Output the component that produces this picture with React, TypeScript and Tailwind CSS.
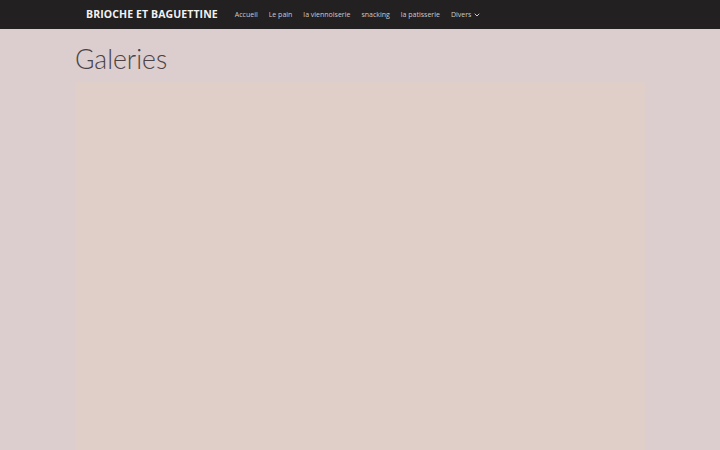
import { ChevronDown } from "lucide-react";

const links = ["Accueil", "Le pain", "la viennoiserie", "snacking", "la patisserie"];

export default function App() {
  return (
    <div className="min-h-screen bg-[#dccdcf] font-['Lato',sans-serif]">
      <nav className="h-[29px] bg-[#222021] flex items-center">
        <div className="w-[570px] mx-auto flex items-center pl-[11px] pt-[1px]">
          <span className="text-[#f2f2f2] text-[10.5px] font-bold tracking-[0.01em] font-['Open_Sans',sans-serif]">
            BRIOCHE ET BAGUETTINE
          </span>
          <ul className="flex items-center gap-[11px] ml-[17px] text-[7px] text-[#cfcaca] font-['Open_Sans',sans-serif]">
            {links.map((l) => (
              <li key={l}>{l}</li>
            ))}
            <li className="flex items-center gap-[2px]">
              Divers <ChevronDown size={8} strokeWidth={3} />
            </li>
          </ul>
        </div>
      </nav>
      <main className="w-[570px] mx-auto">
        <h1 className="text-[26.5px] font-light text-[#4a4244] leading-none pt-[17px] pb-[9px]">
          Galeries
        </h1>
        <div className="h-[400px] bg-[#e0cec8]" />
      </main>
    </div>
  );
}
